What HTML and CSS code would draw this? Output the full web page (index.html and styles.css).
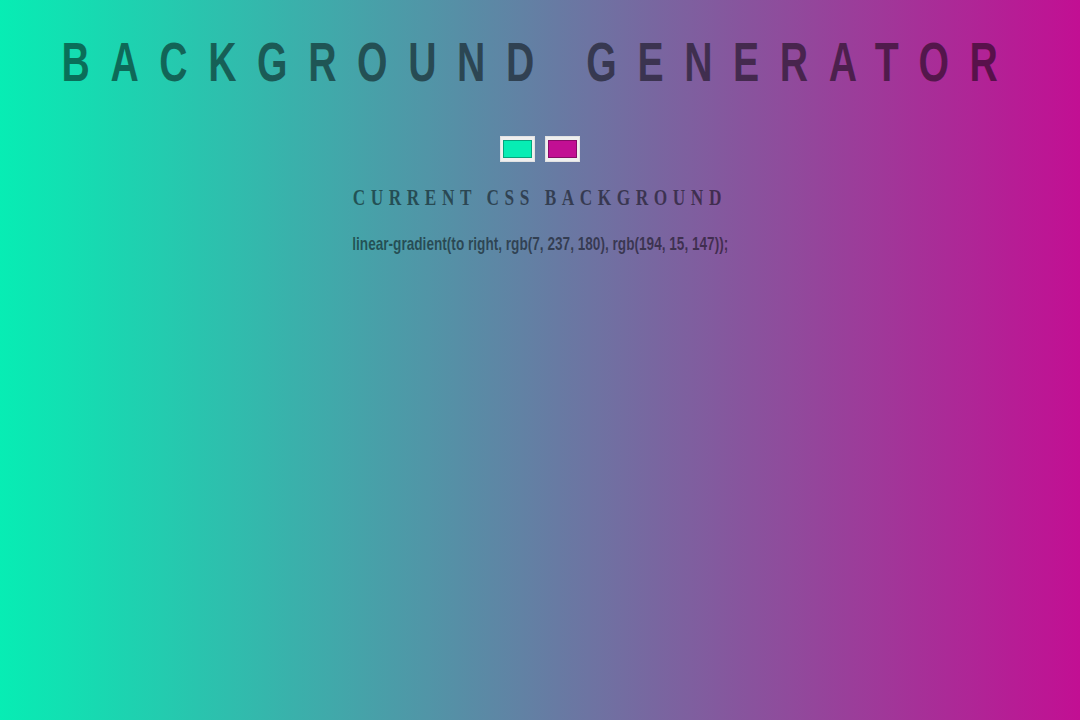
FILE: index.html
```html
<!DOCTYPE html>
<html lang="en">
<head>
<meta charset="utf-8">
<title>Background Generator</title>
<link rel="stylesheet" href="styles.css">
</head>
<body>
  <h1 class="title">Background Generator</h1>
  <div class="pickers">
    <input class="picker" type="color" name="color1" value="#07edb4">
    <input class="picker" type="color" name="color2" value="#c20f93">
  </div>
  <h2 class="subtitle">Current CSS Background</h2>
  <h3 class="css-value">linear-gradient(to right, rgb(7, 237, 180), rgb(194, 15, 147));</h3>
</body>
</html>
```

FILE: styles.css
```css
html {
  min-height: 100%;
}

body {
  margin: 0;
  min-height: 100vh;
  background: linear-gradient(to right, rgb(7, 237, 180), rgb(194, 15, 147));
  color: rgba(0, 0, 0, 0.5);
  text-align: center;
  font-family: "Liberation Sans", Arial, sans-serif;
  display: flex;
  flex-direction: column;
  align-items: center;
}

/* condensed display type: glyphs set at 70% size, then stretched back to full height */
.title {
  margin: 31px 0 0;
  font-size: 39.2px;
  line-height: 44.8px;
  font-weight: 700;
  text-transform: uppercase;
  letter-spacing: 20.6px;
  white-space: nowrap;
  transform: scaleY(1.4286);
  transform-origin: center top;
}

.pickers {
  margin-top: 60px;
  display: flex;
  gap: 10px;
}

.picker {
  -webkit-appearance: none;
  appearance: none;
  width: 35px;
  height: 26px;
  margin: 0;
  padding: 0;
  border: 1px solid #e2e2e2;
  background: #efefef;
  box-sizing: border-box;
  cursor: pointer;
}

.picker::-webkit-color-swatch-wrapper {
  padding: 3px 2px;
}

.picker::-webkit-color-swatch {
  border: 1px solid rgba(0, 0, 0, 0.3);
  border-radius: 0;
}

.subtitle {
  margin: 21px 0 0;
  font-family: "Liberation Serif", "Times New Roman", serif;
  font-size: 24px;
  line-height: 28px;
  font-weight: 700;
  text-transform: uppercase;
  letter-spacing: 7.7px;
  white-space: nowrap;
  transform: scaleX(0.72);
}

.css-value {
  margin: 22px 0 0;
  font-size: 18.72px;
  line-height: 22px;
  font-weight: 700;
  white-space: nowrap;
  transform: scaleX(0.728);
}
```
